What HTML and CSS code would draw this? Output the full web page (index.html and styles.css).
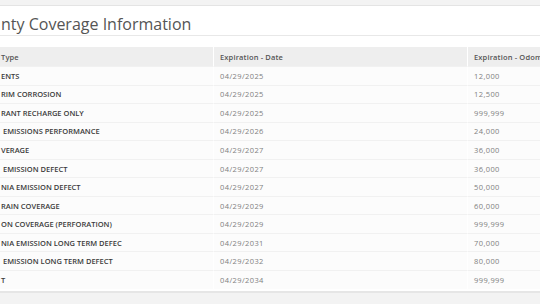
FILE: index.html
```html
<!DOCTYPE html>
<html lang="en">
<head>
<meta charset="utf-8">
<title>Warranty Coverage Information</title>
<link rel="stylesheet" href="styles.css">
</head>
<body>
<div class="page">
  <section class="card">
    <h2 class="card-title">nty Coverage Information</h2>
    <div class="card-body">
      <table class="coverage">
        <colgroup>
          <col class="c-type">
          <col class="c-date">
          <col class="c-odo">
        </colgroup>
        <thead>
          <tr><th>Type</th><th>Expiration - Date</th><th>Expiration - Odometer</th></tr>
        </thead>
        <tbody>
          <tr><td class="type">ENTS</td><td>04/29/2025</td><td>12,000</td></tr>
          <tr><td class="type">RIM CORROSION</td><td>04/29/2025</td><td>12,500</td></tr>
          <tr><td class="type">RANT RECHARGE ONLY</td><td>04/29/2025</td><td>999,999</td></tr>
          <tr><td class="type">&nbsp;EMISSIONS PERFORMANCE</td><td>04/29/2026</td><td>24,000</td></tr>
          <tr><td class="type">VERAGE</td><td>04/29/2027</td><td>36,000</td></tr>
          <tr><td class="type">&nbsp;EMISSION DEFECT</td><td>04/29/2027</td><td>36,000</td></tr>
          <tr><td class="type">NIA EMISSION DEFECT</td><td>04/29/2027</td><td>50,000</td></tr>
          <tr><td class="type">RAIN COVERAGE</td><td>04/29/2029</td><td>60,000</td></tr>
          <tr><td class="type">ON COVERAGE (PERFORATION)</td><td>04/29/2029</td><td>999,999</td></tr>
          <tr><td class="type">NIA EMISSION LONG TERM DEFEC</td><td>04/29/2031</td><td>70,000</td></tr>
          <tr><td class="type">&nbsp;EMISSION LONG TERM DEFECT</td><td>04/29/2032</td><td>80,000</td></tr>
          <tr><td class="type">T</td><td>04/29/2034</td><td>999,999</td></tr>
        </tbody>
      </table>
    </div>
  </section>
</div>
</body>
</html>
```
FILE: styles.css
```css
html, body {
  margin: 0;
  padding: 0;
}
body {
  width: 540px;
  height: 304px;
  overflow: hidden;
  background: #f3f3f3;
  font-family: "Open Sans", "Liberation Sans", sans-serif;
}
.page {
  padding-top: 5px;
}
.card {
  background: #fff;
  border-top: 1px solid #e4e4e4;
  border-bottom: 2px solid #e6e6e6;
  width: 720px;
}
.card-title {
  margin: 0;
  height: 29px;
  line-height: 36px;
  padding-left: 1px;
  font-size: 16px;
  font-weight: normal;
  color: #555;
  border-bottom: 1px solid #e8e8e8;
}
.card-body {
  padding: 11px 0 2px 0;
}
.coverage {
  border-collapse: separate;
  border-spacing: 0;
  table-layout: fixed;
  width: 720px;
}
.c-type { width: 213px; }
.c-date { width: 254px; }
.c-odo { width: 253px; }
.coverage th {
  height: 19px;
  padding: 0 0 0 6px;
  background: #eeeeee;
  color: #555;
  font-size: 7.5px;
  font-weight: 600;
  letter-spacing: 0.15px;
  text-align: left;
  white-space: nowrap;
  border-left: 1px solid #fff;
}
.coverage td {
  height: 17.55px;
  padding: 0 0 0 6px;
  background: #fcfcfc;
  color: #808080;
  font-size: 7.5px;
  letter-spacing: 0.4px;
  white-space: nowrap;
  border-left: 1px solid #fff;
  border-top: 1px solid #f1f1f1;
}
.coverage th:first-child,
.coverage td:first-child {
  padding-left: 1px;
  border-left: 0;
}
.coverage td.type {
  color: #3a3a3a;
  font-weight: 600;
  letter-spacing: 0;
}
```
